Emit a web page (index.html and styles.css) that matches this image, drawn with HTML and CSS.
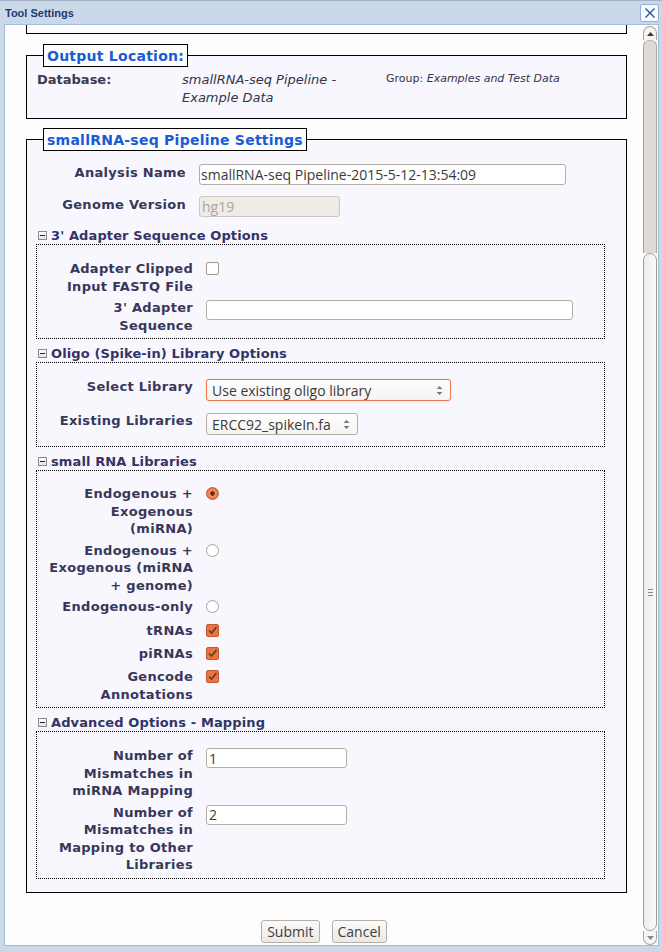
FILE: index.html
```html
<!DOCTYPE html>
<html>
<head>
<meta charset="utf-8">
<title>Tool Settings</title>
<link rel="stylesheet" href="styles.css">
</head>
<body>
<div class="dialog">
  <div class="titlebar">
    <span class="title">Tool Settings</span>
    <span class="close"><svg width="12" height="12" viewBox="0 0 12 12"><path d="M1.5 1.5 L10.5 10.5 M10.5 1.5 L1.5 10.5" stroke="#2b4f8e" stroke-width="1.3" fill="none"/></svg></span>
  </div>
  <div class="body">
    <div class="scroller">
      <div class="stub"></div>

      <fieldset class="fs fs-out">
        <legend>Output Location:</legend>
        <div class="out-grid">
          <div class="out-label">Database:</div>
          <div class="out-db">smallRNA-seq Pipeline - Example Data</div>
          <div class="out-group">Group: <em>Examples and Test Data</em></div>
        </div>
      </fieldset>

      <fieldset class="fs fs-settings">
        <legend>smallRNA-seq Pipeline Settings</legend>
        <div class="main-rows">
          <div class="row">
            <label class="lbl lbl-main">Analysis Name</label>
            <input class="txt w-name" type="text" value="smallRNA-seq Pipeline-2015-5-12-13:54:09">
          </div>
          <div class="row">
            <label class="lbl lbl-main">Genome Version</label>
            <input class="txt w-genome" type="text" value="hg19" disabled>
          </div>
        </div>

        <div class="sec-head first"><span class="toggle"></span>3' Adapter Sequence Options</div>
        <div class="sec-box">
          <div class="row">
            <label class="lbl">Adapter Clipped Input FASTQ File</label>
            <span class="cb"></span>
          </div>
          <div class="row">
            <label class="lbl">3' Adapter Sequence</label>
            <input class="txt w-adapter" type="text" value="">
          </div>
        </div>

        <div class="sec-head"><span class="toggle"></span>Oligo (Spike-in) Library Options</div>
        <div class="sec-box">
          <div class="row">
            <label class="lbl">Select Library</label>
            <div class="select focus w-lib"><span class="sel-text">Use existing oligo library</span><svg class="arrows" width="7" height="11" viewBox="0 0 7 11"><path d="M0.5 4 L3.5 1 L6.5 4 Z M0.5 7 L3.5 10 L6.5 7 Z" fill="#7d7873"/></svg></div>
          </div>
          <div class="row">
            <label class="lbl">Existing Libraries</label>
            <div class="select w-exist"><span class="sel-text">ERCC92_spikeIn.fa</span><svg class="arrows" width="7" height="11" viewBox="0 0 7 11"><path d="M0.5 4 L3.5 1 L6.5 4 Z M0.5 7 L3.5 10 L6.5 7 Z" fill="#7d7873"/></svg></div>
          </div>
        </div>

        <div class="sec-head"><span class="toggle"></span>small RNA Libraries</div>
        <div class="sec-box box-rna">
          <div class="row">
            <label class="lbl">Endogenous + Exogenous (miRNA)</label>
            <span class="radio on"></span>
          </div>
          <div class="row">
            <label class="lbl">Endogenous + Exogenous (miRNA + genome)</label>
            <span class="radio"></span>
          </div>
          <div class="row">
            <label class="lbl">Endogenous-only</label>
            <span class="radio"></span>
          </div>
          <div class="row row-cb">
            <label class="lbl">tRNAs</label>
            <span class="cb on"><svg width="11" height="11" viewBox="0 0 11 11"><path d="M2 5.5 L4.5 8 L9.5 2" stroke="#5a3b2c" stroke-width="1.6" fill="none"/></svg></span>
          </div>
          <div class="row row-cb">
            <label class="lbl">piRNAs</label>
            <span class="cb on"><svg width="11" height="11" viewBox="0 0 11 11"><path d="M2 5.5 L4.5 8 L9.5 2" stroke="#5a3b2c" stroke-width="1.6" fill="none"/></svg></span>
          </div>
          <div class="row row-cb">
            <label class="lbl">Gencode Annotations</label>
            <span class="cb on"><svg width="11" height="11" viewBox="0 0 11 11"><path d="M2 5.5 L4.5 8 L9.5 2" stroke="#5a3b2c" stroke-width="1.6" fill="none"/></svg></span>
          </div>
        </div>

        <div class="sec-head"><span class="toggle"></span>Advanced Options - Mapping</div>
        <div class="sec-box">
          <div class="row">
            <label class="lbl">Number of Mismatches in miRNA Mapping</label>
            <input class="txt w-num" type="text" value="1">
          </div>
          <div class="row">
            <label class="lbl">Number of Mismatches in Mapping to Other Libraries</label>
            <input class="txt w-num" type="text" value="2">
          </div>
        </div>
      </fieldset>

      <div class="buttons">
        <button class="btn">Submit</button>
        <button class="btn">Cancel</button>
      </div>
    </div>

    <div class="scrollbar">
      <div class="sb-up"><svg width="7" height="4" viewBox="0 0 7 4"><path d="M0 4 L3.5 0 L7 4 Z" fill="#3c3a38"/></svg></div>
      <div class="sb-track"></div>
      <div class="sb-thumb"><span class="grip"></span></div>
      <div class="sb-down"><svg width="7" height="4" viewBox="0 0 7 4"><path d="M0 0 L3.5 4 L7 0 Z" fill="#8a8682"/></svg></div>
    </div>
  </div>
</div>
</body>
</html>
```

FILE: styles.css
```css
* { box-sizing: border-box; }

html, body {
  margin: 0;
  padding: 0;
}

body {
  width: 662px;
  height: 952px;
  overflow: hidden;
  background: #cbd8e8;
  font-family: "DejaVu Sans", Verdana, sans-serif;
}

.dialog {
  height: 952px;
  display: flex;
  flex-direction: column;
  background: #cbd8e8;
  border-top: 1px solid #a3b1c4;
}

.titlebar {
  height: 23px;
  display: flex;
  align-items: center;
  justify-content: space-between;
  padding: 0 3px 0 5px;
}

.title {
  font: bold 11px "Liberation Sans", Arial, sans-serif;
  color: #1b3a74;
}

.close {
  width: 19px;
  height: 18px;
  background: #f7f9fc;
  border: 1px solid #8eafd9;
  border-radius: 2px;
  display: flex;
  align-items: center;
  justify-content: center;
}

.body {
  flex: 1;
  margin: 0 3px 6px 4px;
  border: 1px solid #9ebbe0;
  background: #fdfdfe;
  display: flex;
  overflow: hidden;
}

.scroller {
  flex: 1;
  overflow: hidden;
}

.stub {
  width: 601px;
  height: 9px;
  margin-left: 21px;
  border: 1px solid #000;
  border-top: none;
}

/* fieldsets */
.fs {
  width: 601px;
  margin: 0 0 0 21px;
  min-width: 0;
  border: 1px solid #000;
  background: #f7f7fd;
  padding: 0 9px;
}

.fs legend {
  margin-left: 7px;
  padding: 3px 3px 2px 3px;
  border: 1px solid #000;
  background: #fdfdfe;
  font: bold 14px/16px "DejaVu Sans", Verdana, sans-serif;
  letter-spacing: 0.25px;
  color: #1a5ad8;
}

.fs-out {
  margin-top: 10px;
  padding-top: 4px;
  padding-bottom: 11px;
}

.out-grid {
  display: grid;
  grid-template-columns: 145px 204px auto;
  align-items: start;
  padding-left: 1px;
}

.out-label {
  font: bold 13px/18px "DejaVu Sans", Verdana, sans-serif;
  color: #3a3a52;
}

.out-db {
  font: italic 13px/18px "DejaVu Sans", Verdana, sans-serif;
  color: #34344a;
  padding-right: 14px;
}

.out-group {
  font: 11px/16px "DejaVu Sans", Verdana, sans-serif;
  color: #34344a;
}

.fs-settings {
  margin-top: 9px;
  padding-top: 11px;
  padding-bottom: 13px;
}

.main-rows {
  display: flex;
  flex-direction: column;
  gap: 7px;
}

/* rows */
.row {
  display: flex;
  align-items: flex-start;
  padding: 2px 0;
}

.row-cb {
  padding: 4.5px 0 1px;
}

.lbl {
  width: 148px;
  flex: none;
  margin-right: 13px;
  text-align: right;
  font: bold 13px/17.5px "DejaVu Sans", Verdana, sans-serif;
  letter-spacing: 0.3px;
  color: #37375a;
}

.lbl-main {
  width: 150px;
  line-height: 17px;
}

/* inputs */
.txt {
  height: 20px;
  margin: 1px 0 0;
  padding: 0 2px;
  border: 1px solid #b5aea6;
  border-radius: 3px;
  background: #fff;
  font: 14px "Open Sans", "DejaVu Sans", sans-serif;
  color: #3a3a3a;
  outline: none;
}

.w-name { width: 367px; height: 21px; margin: 0; padding-left: 1px; }
.w-genome { width: 141px; height: 21px; margin: 0; }
.w-adapter { width: 367px; }
.w-num { width: 141px; }

.txt:disabled {
  background: #efebe7;
  border-color: #cdc7c1;
  color: #aaa59f;
}

.select {
  height: 22px;
  margin: 1px 0 7px;
  display: flex;
  align-items: center;
  justify-content: space-between;
  padding: 0 7px 0 5px;
  border: 1px solid #b5aea6;
  border-radius: 3px;
  background: linear-gradient(#fefefe, #f6f4f2);
  font: 14px "Open Sans", "DejaVu Sans", sans-serif;
  color: #3a3a3a;
  white-space: nowrap;
}

.select.focus {
  border-color: #ee7a4a;
  box-shadow: 0 0 1px #f3a07c;
}

.w-lib { width: 245px; }
.w-exist { width: 152px; }

/* section heads */
.sec-head {
  margin-top: 6px;
  display: flex;
  align-items: center;
  font: bold 13px/17px "DejaVu Sans", Verdana, sans-serif;
  letter-spacing: 0.12px;
  color: #333366;
}

.sec-head.first {
  margin-top: 8px;
}

.toggle {
  width: 9px;
  height: 9px;
  margin: 0 4px 0 2px;
  border: 1px solid #8a8a8a;
  background: linear-gradient(#ffffff, #e4e4e4);
  position: relative;
}

.toggle::after {
  content: "";
  position: absolute;
  left: 1px;
  right: 1px;
  top: 3px;
  height: 1px;
  background: #222;
}

.sec-box {
  width: 569px;
  border: 1px dotted #000;
  padding: 13px 0 2px 8px;
}

.box-rna {
  padding-top: 12px;
  padding-bottom: 3px;
}

/* checkbox / radio */
.cb {
  width: 13px;
  height: 13px;
  flex: none;
  margin-top: 2px;
  border: 1px solid #9f9891;
  border-radius: 2px;
  background: #fff;
  display: flex;
  align-items: center;
  justify-content: center;
}

.cb.on {
  background: #ec7443;
  border-color: #c2592e;
}

.radio {
  width: 13px;
  height: 13px;
  flex: none;
  margin-top: 2px;
  border: 1px solid #a9a39d;
  border-radius: 50%;
  background: #fff;
}

.radio.on {
  border-color: #c2592e;
  background: radial-gradient(circle, #6a2d17 0, #6a2d17 2px, #f29a72 2.6px, #ec7443 5px);
}

/* buttons */
.buttons {
  margin-top: 27px;
  display: flex;
  justify-content: center;
  gap: 12px;
}

.btn {
  height: 23px;
  padding: 0 5px;
  border: 1px solid #b6aea6;
  border-radius: 3px;
  background: linear-gradient(#fcfbfa, #ebe8e5);
  font: 14px "Open Sans", "DejaVu Sans", sans-serif;
  color: #3c3c3c;
}

/* scrollbar */
.scrollbar {
  width: 14px;
  margin: 1px 1px 0 0;
  display: flex;
  flex-direction: column;
}

.sb-up, .sb-down {
  height: 14px;
  flex: none;
  display: flex;
  align-items: center;
  justify-content: center;
  background: #f6f5f3;
  border: 1px solid #aaa49e;
}

.sb-up {
  border-radius: 7px 7px 0 0;
  border-bottom: none;
}

.sb-down {
  border-radius: 0 0 7px 7px;
  border-top: none;
}

.sb-track {
  height: 213px;
  flex: none;
  background: #dedad5;
  border-left: 1px solid #aaa49e;
  border-right: 1px solid #aaa49e;
  border-top: 1px solid #bdb7b1;
  border-radius: 6px 6px 0 0;
}

.sb-thumb {
  flex: 1;
  background: linear-gradient(90deg, #efedeb, #faf9f8);
  border: 1px solid #a29c96;
  border-radius: 7px;
  display: flex;
  align-items: center;
  justify-content: center;
}

.grip {
  width: 5px;
  height: 7px;
  border-top: 1px solid #8f8a85;
  border-bottom: 1px solid #8f8a85;
  position: relative;
}

.grip::after {
  content: "";
  position: absolute;
  left: 0;
  right: 0;
  top: 2px;
  height: 1px;
  background: #8f8a85;
}
```
